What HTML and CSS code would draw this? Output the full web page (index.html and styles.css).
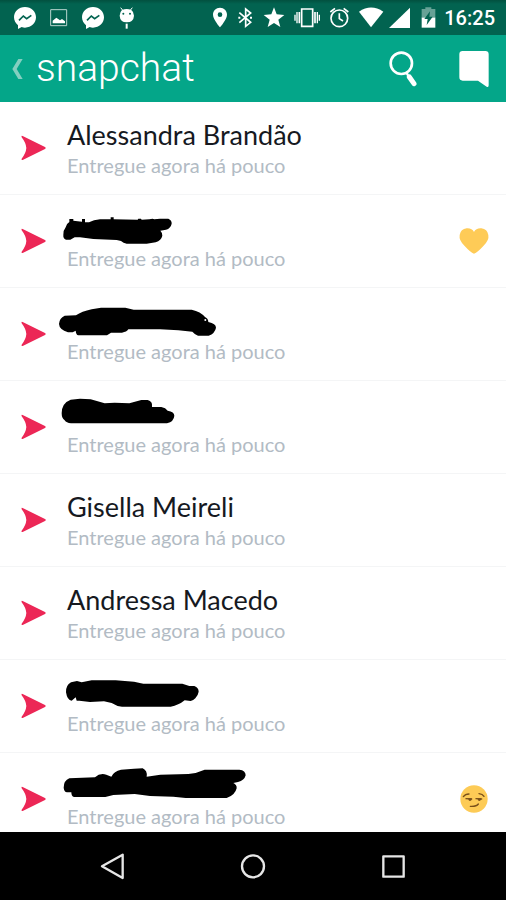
FILE: index.html
```html
<!DOCTYPE html>
<html lang="pt-BR">
<head>
<meta charset="utf-8">
<meta name="viewport" content="width=device-width, initial-scale=1">
<title>Snapchat</title>
<link rel="stylesheet" href="styles.css">
</head>
<body>
<svg class="defs" aria-hidden="true">
  <symbol id="sent" viewBox="60 90 84 84"><path d="M65 96Q64 95 68 96L135 129Q140 132 135 135L68 168Q63 169 65 164Q78 147 79 132Q78 117 65 100Q63 96 66 96Z"/></symbol>
  <symbol id="messenger" viewBox="24 0 102 105"><path fill="#fff" d="M75 21C56 21 42 35 42 52C42 62 47 70 54 76V87L65 81Q70 83 75 83C94 83 108 69 108 52C108 35 94 21 75 21Z"/><path fill="none" stroke="#026350" stroke-width="5" d="M57 61L70 48L80 56L94 46"/></symbol>
</svg>
<div class="screen">
  <div class="status">
    <div class="group">
      <svg width="34" height="35"><use href="#messenger"/></svg>
      <svg width="34" height="35" viewBox="126 0 102 105"><path fill="none" stroke="#b9d6d0" stroke-width="3" d="M152 29H200V77H152Z"/><path fill="#fff" d="M158 70V62L169 53L180 61L186 57L195 64V70Z"/></svg>
      <svg width="34" height="35"><use href="#messenger"/></svg>
      <svg width="34" height="35" viewBox="330 0 102 105"><path stroke="#fff" stroke-width="3" d="M362 23L369 32M397 23L390 32"/><path fill="#fff" d="M366 30Q380 24 394 30Q402 36 402 47Q401 66 380 67Q360 66 359 47Q359 36 366 30Z"/><path stroke="#fff" stroke-width="6" d="M380 71V86"/><circle cx="370" cy="41" r="3" fill="#026350"/><circle cx="390" cy="41" r="3" fill="#026350"/></svg>
    </div>
    <div class="group">
      <svg width="24" height="35" viewBox="24 0 72 105"><path fill="#fff" fill-rule="evenodd" d="M60 23C48 23 39 32 39 44C39 58 60 82 60 82S81 58 81 44C81 32 72 23 60 23ZM60 37A7 7 0 1 1 60 51A7 7 0 1 1 60 37Z"/></svg>
      <svg width="26" height="35" viewBox="96 0 78 105"><path fill="none" stroke="#fff" stroke-width="5" d="M118 38L152 67L137 79V27L152 39L118 68"/><path fill="#fff" d="M115 50h6v6h-6zM150 50h6v6h-6z"/></svg>
      <svg width="32" height="35" viewBox="174 0 96 105"><path fill="#fff" d="M222 22L230 43L253 45L235 59L241 81L222 69L203 81L209 59L191 45L214 43Z"/></svg>
      <svg width="34" height="35" viewBox="270 0 102 105"><path fill="none" stroke="#fff" stroke-width="5" d="M305 27H338V79H305ZM298 36V70M345 36V70"/><path fill="none" stroke="#fff" stroke-width="4" d="M291 36V70M285 44V62M352 36V70M358 44V62"/></svg>
      <svg width="31" height="35" viewBox="372 0 93 105"><circle cx="418" cy="55" r="25" fill="none" stroke="#fff" stroke-width="5"/><path fill="none" stroke="#fff" stroke-width="5" d="M418 40V56L429 63M391 36L405 25M445 36L431 25"/></svg>
      <svg width="31" height="35" viewBox="465 0 93 105"><path fill="#fff" d="M477 35Q513 10 550 35L513 82Z"/></svg>
      <svg width="28" height="35" viewBox="558 0 84 105"><path fill="#fff" d="M567 84L630 23V84Z"/></svg>
      <svg width="28" height="35" viewBox="642 0 84 105"><path fill="#67a296" d="M665 27H676V22H694V27H706V54H665Z"/><path fill="#fff" d="M665 53H706V83H665Z"/><path fill="#026350" d="M690 34L673 57H683L680 75L698 50H688Z"/></svg>
      <time class="clock">16:25</time>
    </div>
  </div>
  <header class="bar">
    <button class="back" aria-label="Voltar">
      <svg width="14" height="24" viewBox="33 171 42 72"><path fill="#83cfc0" d="M55 177H68L50 207L68 237H55L37 207Z"/></svg>
    </button>
    <h1 class="brand">snapchat</h1>
    <button class="tool" aria-label="Buscar">
      <svg width="32" height="40" viewBox="560 147 96 120"><circle cx="603" cy="190" r="32" fill="none" stroke="#fff" stroke-width="8"/><path fill="none" stroke="#fff" stroke-width="7" d="M618 217L624 228"/><path stroke="#fff" stroke-width="15" stroke-linecap="round" d="M627 231L641 251"/></svg>
    </button>
    <button class="tool" aria-label="Conversas">
      <svg width="32" height="40" viewBox="774 147 96 120"><path fill="#fff" d="M788 153H856Q866 153 866 163V256Q866 263 860 260L834 242H788Q778 242 778 232V163Q778 153 788 153Z"/></svg>
    </button>
  </header>
  <main class="feed">
    <ul class="list">
      <li><button class="row"><svg class="sent"><use href="#sent"/></svg><span class="text"><span class="name">Alessandra Brandão</span><span class="note">Entregue agora há pouco</span></span></button></li>
      <li><button class="row"><svg class="sent"><use href="#sent"/></svg><span class="text"><svg class="hidden-name" viewBox="171 321 600 96"><path d="M190 390Q190 375 197 367Q199 356 208 351V342H220V347L246 350V342H255V352L267 352Q281 344 300 343H332V337H341V343L413 344L415 341H423L425 344L448 343L458 341L463 343L480 341H505Q516 346 515 356Q512 370 498 374L481 377Q488 384 487 392Q484 406 467 412L440 416H380Q370 414 363 408L350 405L280 402L240 397H224L211 404H198Q189 401 190 390Z"/></svg><span class="note">Entregue agora há pouco</span></span><svg class="emoji" viewBox="54 46 96 96" role="img" aria-label="Coração amarelo"><path fill="#fecb57" d="M102 132Q91 128 74 109Q56 92 59 76Q62 58 80 56Q96 55 102 67Q108 55 124 56Q142 58 145 76Q148 92 130 109Q113 128 102 132Z"/></svg></button></li>
      <li><button class="row"><svg class="sent"><use href="#sent"/></svg><span class="text"><svg class="hidden-name" viewBox="171 45 600 96"><path d="M177 102Q178 84 194 77L228 76Q245 64 275 58L303 53H376L401 59H575Q602 65 615 81Q625 86 625 96Q648 101 648 113Q645 130 626 137H594Q585 134 577 125L535 121L480 118H385Q380 126 366 128H333L321 136H235Q228 134 227 122L218 127H204Q178 119 177 102Z"/><circle cx="616" cy="90" r="3" fill="#fff"/></svg><span class="note">Entregue agora há pouco</span></span></button></li>
      <li><button class="row"><svg class="sent"><use href="#sent"/></svg><span class="text"><svg class="hidden-name" viewBox="171 324 600 96"><path d="M185 370Q185 339 212 329L240 326L272 328L314 340L344 338L388 340L424 330H443Q459 334 456 351H484Q497 353 503 362Q523 365 523 377Q522 394 501 400H213Q199 399 194 391Q185 385 185 370Z"/></svg><span class="note">Entregue agora há pouco</span></span></button></li>
      <li><button class="row"><svg class="sent"><use href="#sent"/></svg><span class="text"><span class="name">Gisella Meireli</span><span class="note">Entregue agora há pouco</span></span></button></li>
      <li><button class="row"><svg class="sent"><use href="#sent"/></svg><span class="text"><span class="name">Andressa Macedo</span><span class="note">Entregue agora há pouco</span></span></button></li>
      <li><button class="row"><svg class="sent"><use href="#sent"/></svg><span class="text"><svg class="hidden-name" viewBox="171 51 600 96"><path d="M198 97Q197 76 213 67L231 63L245 67L275 61H347L402 65L430 71H547L568 78H583Q596 83 596 95Q594 107 586 115Q580 122 572 123L554 121Q536 136 512 140H366Q350 139 335 129L312 124L270 126L238 122H230L227 112L215 122Q202 122 198 97Z"/></svg><span class="note">Entregue agora há pouco</span></span></button></li>
      <li><button class="row"><svg class="sent"><use href="#sent"/></svg><span class="text"><svg class="hidden-name" viewBox="171 330 600 96"><path d="M191 383Q191 362 208 355L285 352Q300 338 319 344L334 350Q342 333 363 329L402 326L428 325Q443 332 440 350L481 344L565 342Q590 340 614 329H718Q737 331 737 346Q733 362 714 366L700 369Q711 374 710 385Q705 406 680 414H557L520 410L450 408L404 402L340 405L316 411H222Q214 409 214 397H201Q192 395 191 383Z"/></svg><span class="note">Entregue agora há pouco</span></span><svg class="emoji" viewBox="54 36 96 96" role="img" aria-label="Sorriso malicioso"><circle cx="102" cy="84" r="41" fill="#fdcb56"/><g fill="none" stroke="#79501a" stroke-linecap="round" stroke-width="4"><path d="M70 77Q76 69 87 69M117 68Q128 69 132 76M91 106Q109 107 115 99"/><path d="M78 83L95 84M108 83L125 84"/></g><path fill="#79501a" d="M85 82H95Q96 90 89 90Q84 88 85 82ZM113 82H123Q124 90 117 90Q112 88 113 82Z"/></svg></button></li>
    </ul>
  </main>
  <nav class="nav">
    <button aria-label="Voltar"><svg width="32" height="32" viewBox="111 60 96 96"><path d="M126 109L188 74V144Z"/></svg></button>
    <button aria-label="Início"><svg width="32" height="32" viewBox="531 60 96 96"><circle cx="579" cy="109" r="33"/></svg></button>
    <button aria-label="Recentes"><svg width="32" height="32" viewBox="951 60 96 96"><path d="M970 79H1031V140H970Z"/></svg></button>
  </nav>
</div>
</body>
</html>
```
FILE: styles.css
```css
* {
  box-sizing: border-box;
}

body {
  margin: 0;
  background: #fff;
  font-family: Lato, "Open Sans", sans-serif;
}

button {
  padding: 0;
  border: 0;
  background: none;
  color: inherit;
  font: inherit;
  cursor: pointer;
}

svg {
  display: block;
  flex: none;
}

.defs {
  position: absolute;
  width: 0;
  height: 0;
}

.screen {
  display: flex;
  flex-direction: column;
  height: 100vh;
}

.status {
  display: flex;
  justify-content: space-between;
  padding: 0 11px 0 8px;
  background: linear-gradient(#02503f, #026350 4px);
  color: #fff;
}

.group {
  display: flex;
  align-items: center;
}

.clock {
  margin-left: 2px;
  font: 500 20px/36px Roboto, sans-serif;
  height: 35px;
}

.bar {
  display: flex;
  align-items: center;
  height: 67px;
  padding: 0 16px 0 11px;
  background: #04a689;
  color: #fff;
}

.brand {
  flex: 1;
  margin: 0 0 0 11px;
  padding-bottom: 2px;
  font: 300 39px/60px Roboto, sans-serif;
}

.tool + .tool {
  margin-left: 39px;
}

.feed {
  flex: 1;
  min-height: 0;
  overflow: hidden;
}

.list {
  margin: 0;
  padding: 0;
  list-style: none;
}

.row {
  display: flex;
  align-items: center;
  width: 100%;
  height: 93px;
  padding: 0 16px 0 20px;
  border-bottom: 1px solid #f4f5f6;
  text-align: left;
}

.sent {
  width: 28px;
  height: 28px;
  fill: #ec2756;
}

.text {
  display: flex;
  flex: 1;
  flex-direction: column;
  gap: 2px;
  margin-left: 19px;
}

.name {
  color: #16191f;
  font-size: 27px;
  line-height: 32px;
}

.hidden-name {
  width: 200px;
  height: 32px;
  margin-left: -10px;
  overflow: visible;
}

.note {
  color: #b2bbc4;
  font-size: 20px;
  line-height: 24px;
}

.emoji {
  width: 32px;
  height: 32px;
}

.nav {
  display: flex;
  align-items: center;
  justify-content: space-between;
  height: 68px;
  padding: 0 97px;
  background: #000;
}

.nav path,
.nav circle {
  fill: none;
  stroke: #e6e6e6;
  stroke-width: 7;
  stroke-linejoin: round;
}
```
